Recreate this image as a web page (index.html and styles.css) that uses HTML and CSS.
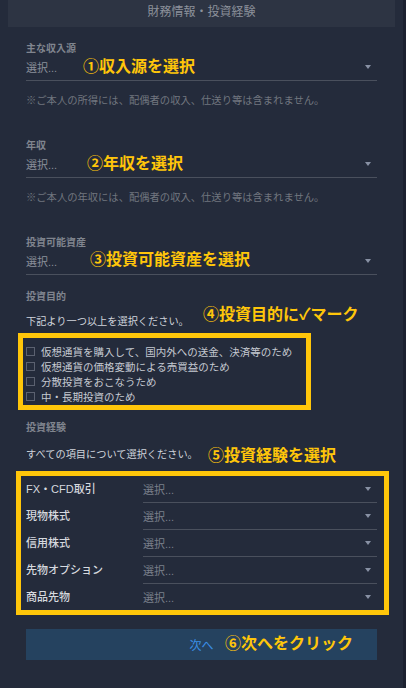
FILE: index.html
```html
<!DOCTYPE html>
<html lang="ja">
<head>
    <meta charset="UTF-8">
    <meta name="viewport" content="width=device-width, initial-scale=1.0">
    <title>財務情報・投資経験</title>

    <link rel="stylesheet" href="styles.css">
</head>
<body>
<div class="page">
    <div class="page-title">財務情報・投資経験</div>

    <form class="form" action="#" method="POST">
        <div class="field field-first">
            <div class="field-label">主な収入源</div>
            <div class="select"><span>選択...</span><span class="caret"></span></div>
            <p class="note">※ご本人の所得には、配偶者の収入、仕送り等は含まれません。</p>
            <span class="hint hint-income">①収入源を選択</span>
        </div>

        <div class="field">
            <div class="field-label">年収</div>
            <div class="select"><span>選択...</span><span class="caret"></span></div>
            <p class="note">※ご本人の年収には、配偶者の収入、仕送り等は含まれません。</p>
            <span class="hint hint-annual">②年収を選択</span>
        </div>

        <div class="field">
            <div class="field-label">投資可能資産</div>
            <div class="select"><span>選択...</span><span class="caret"></span></div>
            <span class="hint hint-assets">③投資可能資産を選択</span>
        </div>

        <div class="section section-purpose">
            <div class="field-label">投資目的</div>
            <p class="instruction">下記より一つ以上を選択ください。</p>
            <span class="hint hint-purpose">④投資目的に✓マーク</span>

            <div class="mark-box purpose-box">
                <label class="check"><input type="checkbox" name="purpose" value="1">仮想通貨を購入して、国内外への送金、決済等のため</label>
                <label class="check"><input type="checkbox" name="purpose" value="2">仮想通貨の価格変動による売買益のため</label>
                <label class="check"><input type="checkbox" name="purpose" value="3">分散投資をおこなうため</label>
                <label class="check"><input type="checkbox" name="purpose" value="4">中・長期投資のため</label>
            </div>
        </div>

        <div class="section section-experience">
            <div class="field-label">投資経験</div>
            <p class="instruction">すべての項目について選択ください。</p>
            <span class="hint hint-experience">⑤投資経験を選択</span>

            <div class="mark-box experience-box">
                <div class="exp-row">
                    <span class="exp-name">FX・CFD取引</span>
                    <div class="exp-select"><span>選択...</span><span class="caret"></span></div>
                </div>
                <div class="exp-row">
                    <span class="exp-name">現物株式</span>
                    <div class="exp-select"><span>選択...</span><span class="caret"></span></div>
                </div>
                <div class="exp-row">
                    <span class="exp-name">信用株式</span>
                    <div class="exp-select"><span>選択...</span><span class="caret"></span></div>
                </div>
                <div class="exp-row">
                    <span class="exp-name">先物オプション</span>
                    <div class="exp-select"><span>選択...</span><span class="caret"></span></div>
                </div>
                <div class="exp-row">
                    <span class="exp-name">商品先物</span>
                    <div class="exp-select"><span>選択...</span><span class="caret"></span></div>
                </div>
            </div>
        </div>

        <div class="next-wrap">
            <button type="submit" class="next-btn">次へ</button>
            <span class="hint hint-next">⑥次へをクリック</span>
        </div>
    </form>
</div>
</body>
</html>
```

FILE: styles.css
```css
body {
    margin: 0;
    padding: 0;
    background-color: #1c2130;
    font-family: "Liberation Sans", "Noto Sans CJK JP", sans-serif;
}

.page {
    width: 403px;
    min-height: 100vh;
    background-color: #242b3b;
}

.page-title {
    margin: 0 8px;
    height: 27px;
    line-height: 25px;
    text-align: center;
    font-size: 12px;
    color: #8c919b;
    background-color: #2d3443;
}

.form {
    padding: 0 26px;
}

.field,
.section {
    position: relative;
    margin-top: 31px;
}

.field-first {
    margin-top: 15px;
}

.section-purpose {
    margin-top: 15px;
}

.section-experience {
    margin-top: 11px;
}

.field-label {
    font-size: 10px;
    line-height: 14px;
    font-weight: bold;
    color: #80858f;
}

.select {
    display: flex;
    justify-content: space-between;
    align-items: center;
    margin-top: 1px;
    height: 20px;
    padding-bottom: 3px;
    border-bottom: 1px solid #4a505d;
    font-size: 11px;
    color: #8b909a;
}

.caret {
    width: 0;
    height: 0;
    margin-right: 6px;
    border-left: 3px solid transparent;
    border-right: 3px solid transparent;
    border-top: 4px solid #8891a4;
}

.note {
    margin: 13px 0 0;
    font-size: 10.3px;
    line-height: 14px;
    color: #71767f;
}

.instruction {
    margin: 10px 0 0;
    font-size: 10.2px;
    line-height: 16px;
    color: #d0d4db;
}

.section-experience .instruction {
    margin-top: 12px;
}

/* yellow guide marks drawn over the form */
.hint {
    position: absolute;
    font-size: 16px;
    line-height: 20px;
    font-weight: bold;
    color: #ffc60a;
    white-space: nowrap;
}

.hint-income {
    left: 57px;
    top: 15px;
}

.hint-annual {
    left: 61px;
    top: 15px;
}

.hint-assets {
    left: 64px;
    top: 14px;
}

.hint-purpose {
    left: 177px;
    top: 15px;
}

.hint-experience {
    left: 182px;
    top: 25px;
}

.hint-next {
    left: 199px;
    top: 5px;
}

.mark-box {
    box-sizing: border-box;
    border: 5px solid #ffc60a;
}

.purpose-box {
    margin: 3px 0 0 -8px;
    width: 293px;
    padding: 6px 0 1px 3px;
}

.check {
    display: flex;
    align-items: center;
    height: 15px;
    font-size: 10.5px;
    color: #c5c9d1;
}

.check input {
    appearance: none;
    -webkit-appearance: none;
    box-sizing: border-box;
    width: 9px;
    height: 9px;
    margin: 0 6px 0 0;
    border: 1px solid #5b6170;
    background-color: #262d3d;
}

.experience-box {
    margin: 8px 0 0 -10px;
    width: 373px;
    padding: 0 7px 0 5px;
}

.exp-row {
    display: flex;
}

.exp-name {
    width: 117px;
    height: 26px;
    line-height: 26px;
    font-size: 11px;
    font-weight: 500;
    color: #d6d9df;
}

.exp-select {
    flex: 1;
    display: flex;
    justify-content: space-between;
    align-items: center;
    height: 26px;
    font-size: 11px;
    color: #7b808b;
    border-bottom: 1px solid #4a505d;
}

.exp-row:last-child .exp-select {
    border-bottom: none;
}

.next-wrap {
    position: relative;
    margin-top: 14px;
}

.next-btn {
    display: block;
    width: 100%;
    height: 31px;
    border: none;
    padding: 0;
    background-color: #25425f;
    color: #3a8ee6;
    font-family: "Liberation Sans", "Noto Sans CJK JP", sans-serif;
    font-size: 12px;
    cursor: pointer;
}
```
